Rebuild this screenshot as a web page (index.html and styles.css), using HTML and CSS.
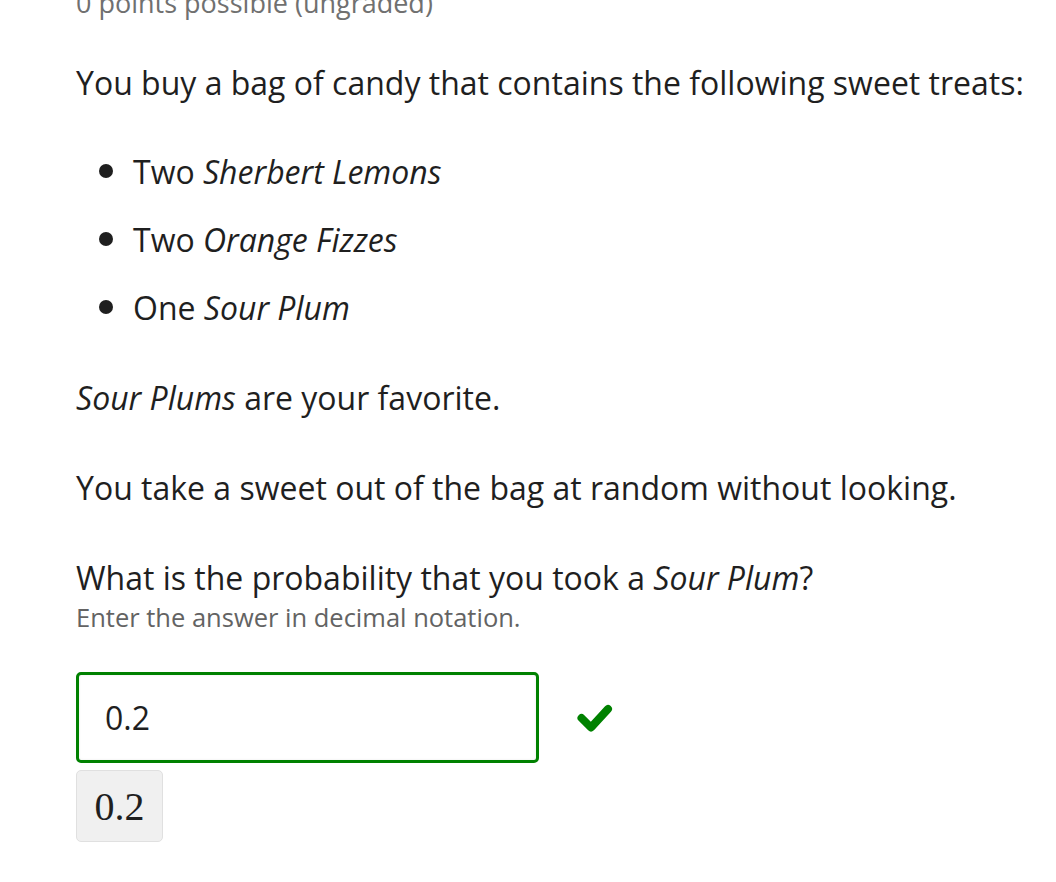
FILE: index.html
```html
<!DOCTYPE html>
<html>
<head>
<meta charset="utf-8">
<link rel="stylesheet" href="styles.css">
</head>
<body>
<div class="problem">
  <div class="points">0 points possible (ungraded)</div>
  <p class="para">You buy a bag of candy that contains the following sweet treats:</p>
  <ul class="list">
    <li>Two <em>Sherbert Lemons</em></li>
    <li>Two <em>Orange Fizzes</em></li>
    <li>One <em>Sour Plum</em></li>
  </ul>
  <p class="para"><em>Sour Plums</em> are your favorite.</p>
  <p class="para">You take a sweet out of the bag at random without looking.</p>
  <p class="question">What is the probability that you took a <em>Sour Plum</em>?</p>
  <p class="hint">Enter the answer in decimal notation.</p>
  <div class="answer-row">
    <div class="answer-input">0.2</div>
    <svg class="check" viewBox="0 0 36 29" width="36" height="29"><polyline points="4.5,14 14,23.5 31,5" fill="none" stroke="#008100" stroke-width="8" stroke-linecap="round" stroke-linejoin="round"/></svg>
  </div>
  <div class="preview">0.2</div>
</div>
</body>
</html>
```
FILE: styles.css
```css
html, body {
  margin: 0;
  padding: 0;
  background: #fff;
}
body {
  font-family: "Open Sans", "Noto Sans", sans-serif;
  color: #1f1f1f;
  overflow: hidden;
}
.problem {
  display: flex;
  flex-direction: column;
  align-items: flex-start;
  padding-left: 76px;
}
.points {
  font-size: 27px;
  line-height: 36px;
  color: #707070;
  margin-top: -15px;
  margin-bottom: 38px;
  white-space: nowrap;
}
.para, .question {
  font-size: 32px;
  line-height: 48px;
  margin: 0 0 42px 0;
}
.list {
  font-size: 32px;
  line-height: 48px;
  margin: -4px 0 45px 0;
  padding-left: 57px;
  display: flex;
  flex-direction: column;
  gap: 20px;
}
.list li {
  margin: 0;
  height: 48px;
}
.list li::marker {
  font-size: 38px;
}
.question {
  margin-bottom: 0;
}
.hint {
  font-size: 25.5px;
  line-height: 34px;
  color: #636363;
  margin: -2px 0 0 0;
}
.answer-row {
  display: flex;
  align-items: center;
  margin-top: 38px;
  gap: 38px;
}
.answer-input {
  box-sizing: border-box;
  width: 463px;
  height: 91px;
  border: 3px solid #008100;
  border-radius: 5px;
  font-size: 32px;
  padding-left: 26px;
  display: flex;
  align-items: center;
  color: #1f1f1f;
  box-shadow: inset 0 0 3px rgba(0,0,0,0.08);
}
.check {
  display: block;
  margin-top: 2px;
}
.preview {
  box-sizing: border-box;
  margin-top: 7px;
  width: 87px;
  height: 72px;
  background: #f0f0f0;
  border: 1px solid #e0e0e0;
  border-radius: 5px;
  font-family: "Liberation Serif", "DejaVu Serif", serif;
  font-size: 40px;
  display: flex;
  align-items: center;
  justify-content: center;
  color: #1f1f1f;
}
```
